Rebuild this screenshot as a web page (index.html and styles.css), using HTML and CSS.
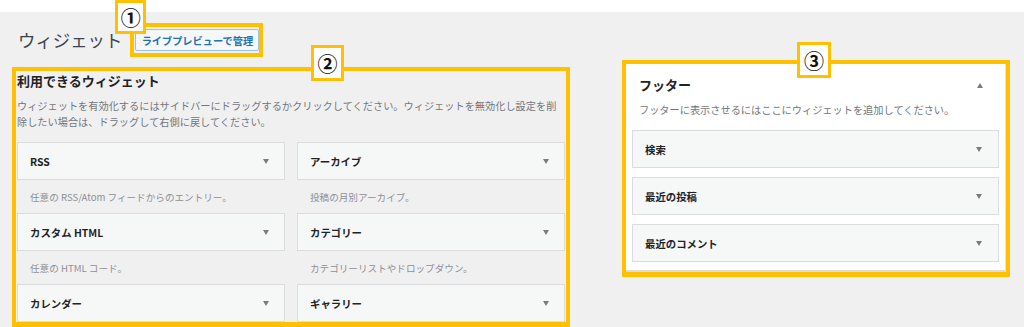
FILE: index.html
```html
<!DOCTYPE html>
<html lang="ja">

<head>
    <meta charset="UTF-8">
    <meta name="viewport" content="width=device-width, initial-scale=1.0">
    <title>ウィジェット</title>
    <link rel="stylesheet" href="styles.css">
</head>

<body>

    <!-- white strip at the very top -->
    <div class="top-strip"></div>

    <!-- Title row -->
    <div class="page-head">
        <h1 class="page-title">ウィジェット</h1>
        <div class="mark mark-btn">
            <span class="badge badge-1">①</span>
            <a class="live-btn">ライブプレビューで管理</a>
        </div>
    </div>

    <div class="columns">

        <!-- Available widgets -->
        <section class="mark mark-available">
            <span class="badge badge-2">②</span>
            <div class="available-body">
                <h2 class="section-title">利用できるウィジェット</h2>
                <p class="intro">ウィジェットを有効化するにはサイドバーにドラッグするかクリックしてください。ウィジェットを無効化し設定を削除したい場合は、ドラッグして右側に戻してください。</p>

                <div class="widget-grid">
                    <div class="widget-item">
                        <div class="widget-top"><span>RSS</span><i class="arrow-down"></i></div>
                        <p class="widget-desc">任意の RSS/Atom フィードからのエントリー。</p>
                    </div>
                    <div class="widget-item">
                        <div class="widget-top"><span>アーカイブ</span><i class="arrow-down"></i></div>
                        <p class="widget-desc">投稿の月別アーカイブ。</p>
                    </div>
                    <div class="widget-item">
                        <div class="widget-top"><span>カスタム HTML</span><i class="arrow-down"></i></div>
                        <p class="widget-desc">任意の HTML コード。</p>
                    </div>
                    <div class="widget-item">
                        <div class="widget-top"><span>カテゴリー</span><i class="arrow-down"></i></div>
                        <p class="widget-desc">カテゴリーリストやドロップダウン。</p>
                    </div>
                    <div class="widget-item">
                        <div class="widget-top"><span>カレンダー</span><i class="arrow-down"></i></div>
                    </div>
                    <div class="widget-item">
                        <div class="widget-top"><span>ギャラリー</span><i class="arrow-down"></i></div>
                    </div>
                </div>
            </div>
        </section>

        <!-- Sidebar area -->
        <section class="mark mark-sidebar">
            <span class="badge badge-3">③</span>
            <div class="sidebar-panel">
                <div class="sidebar-head">
                    <h2 class="section-title">フッター</h2>
                    <i class="arrow-up"></i>
                </div>
                <p class="sidebar-desc">フッターに表示させるにはここにウィジェットを追加してください。</p>
                <div class="sidebar-list">
                    <div class="widget-top"><span>検索</span><i class="arrow-down"></i></div>
                    <div class="widget-top"><span>最近の投稿</span><i class="arrow-down"></i></div>
                    <div class="widget-top"><span>最近のコメント</span><i class="arrow-down"></i></div>
                </div>
            </div>
        </section>

    </div>

</body>

</html>
```

FILE: styles.css
```css
body {
    margin: 0;
    background-color: #f0f0f1;
    font-family: "Noto Sans CJK JP", "Noto Sans", sans-serif;
    color: #1d2327;
}

.top-strip {
    height: 12px;
    background-color: #fff;
}

/* yellow annotation frames */
.mark {
    position: relative;
    box-sizing: border-box;
    border: 4px solid #ffc000;
    border-bottom-width: 5px;
}

.badge {
    position: absolute;
    box-sizing: border-box;
    display: flex;
    align-items: center;
    justify-content: center;
    background-color: #fff;
    border: 3px solid #ffc000;
    font-size: 20px;
    font-weight: bold;
    color: #111;
    z-index: 2;
}

.badge-1 {
    left: -19px;
    top: -27px;
    width: 31px;
    height: 34px;
}

.badge-2 {
    left: 295px;
    top: -26px;
    width: 33px;
    height: 36px;
}

.badge-3 {
    left: 171px;
    top: -22px;
    width: 34px;
    height: 36px;
}

/* title row */
.page-head {
    display: flex;
    align-items: center;
    margin-top: 11px;
    padding-left: 18px;
}

.page-title {
    margin: 0 8px 0 0;
    font-size: 17.4px;
    font-weight: normal;
    color: #3c434a;
    line-height: 24px;
}

.mark-btn {
    border-width: 4px;
    padding: 2px 0 2px 1px;
}

.live-btn {
    display: flex;
    align-items: center;
    justify-content: center;
    box-sizing: border-box;
    width: 124px;
    height: 22px;
    border: 1px solid #9ec2dc;
    border-radius: 2px;
    background-color: #f6f7f7;
    color: #2271b1;
    font-size: 10.2px;
    font-weight: bold;
}

/* two columns */
.columns {
    display: flex;
    align-items: flex-start;
    gap: 52px;
    margin-top: 3px;
    padding-left: 12px;
}

.mark-available {
    width: 558px;
    height: 260px;
    margin-top: 7px;
}

.available-body {
    height: 100%;
    overflow: hidden;
    padding: 0 1px;
}

.section-title {
    margin: 0;
    font-size: 13px;
    font-weight: bold;
    line-height: 18px;
    color: #1d2327;
}

.available-body .section-title {
    padding-top: 1px;
}

.intro {
    margin: 8px 0 0;
    font-size: 10.2px;
    line-height: 16px;
    color: #72777c;
}

.widget-grid {
    display: grid;
    grid-template-columns: 268px 268px;
    column-gap: 12px;
    margin-top: 12px;
}

.widget-top {
    display: flex;
    align-items: center;
    justify-content: space-between;
    box-sizing: border-box;
    height: 38px;
    padding: 0 15px 0 12px;
    border: 1px solid #dcdcde;
    background-color: #f6f7f7;
    font-size: 10.4px;
    font-weight: bold;
    color: #1d2327;
}

.widget-desc {
    display: flex;
    align-items: center;
    height: 33px;
    margin: 0;
    padding-left: 13px;
    font-size: 9.6px;
    color: #8c8f94;
}

.arrow-down {
    width: 0;
    height: 0;
    border-left: 3.5px solid transparent;
    border-right: 3.5px solid transparent;
    border-top: 5px solid #787c82;
}

.arrow-up {
    width: 0;
    height: 0;
    border-left: 3.5px solid transparent;
    border-right: 3.5px solid transparent;
    border-bottom: 5px solid #787c82;
}

/* sidebar */
.mark-sidebar {
    width: 388px;
}

.sidebar-panel {
    background-color: #fff;
    border-right: 1px solid #e2e4e7;
    border-bottom: 2px solid #dcdcde;
    padding-bottom: 8px;
}

.sidebar-head {
    display: flex;
    align-items: center;
    justify-content: space-between;
    padding: 12px 22px 0 13px;
}

.sidebar-desc {
    margin: 8px 0 0 13px;
    font-size: 10.2px;
    line-height: 16px;
    color: #72777c;
}

.sidebar-list {
    display: flex;
    flex-direction: column;
    gap: 9px;
    margin-top: 12px;
    padding: 0 6px;
}

.sidebar-list .widget-top {
    padding: 0 16px 0 12px;
}
```
